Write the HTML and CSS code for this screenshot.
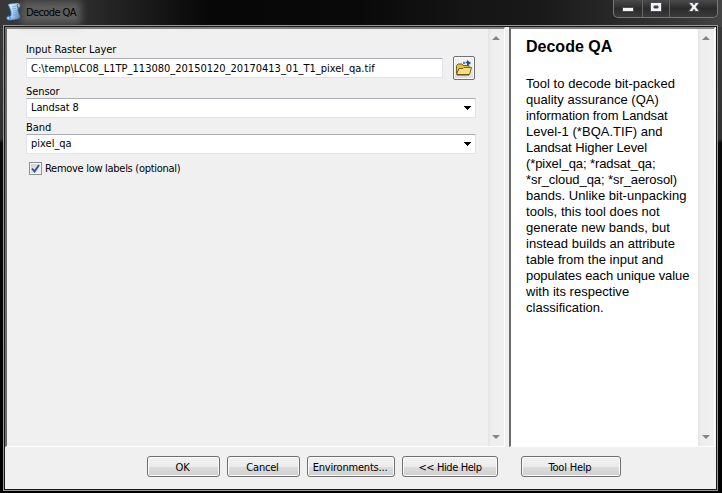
FILE: index.html
```html
<!DOCTYPE html>
<html lang="en">
<head>
<meta charset="utf-8">
<title>Decode QA</title>
<link rel="stylesheet" href="styles.css">
</head>
<body>
<div class="window">
  <header class="titlebar">
    <svg class="app-icon" width="17" height="18" viewBox="0 0 17 18">
      <defs><linearGradient id="scroll" x2="1" y2="1"><stop offset="0" stop-color="#f3fbff"/><stop offset=".55" stop-color="#a9d4f5"/><stop offset="1" stop-color="#3685ce"/></linearGradient></defs>
      <path d="M3 3Q1 1 4 1L12 0Q15 1 14 4L12 5Q11 8 14 13Q14 16 11 16L4 17Q0 17 1 14L5 13Q6 9 3 3Z" fill="url(#scroll)" stroke="#4b94d6" stroke-width=".7"/>
      <path d="M12 1Q10 2 12 5L14 4M1 14Q3 12 4 14T3 16" fill="none" stroke="#3178c1"/>
      <path d="M6 4L10 3M6 6L10 5.5M7 8L11 7.5M7 10L11 9.5M7 12L11 11.5" fill="none" stroke="#5a9bd8" stroke-width=".7"/>
    </svg>
    <span class="title">Decode QA</span>
    <div class="controls">
      <span class="control"><svg width="12" height="11"><rect x=".5" y="5.5" width="11" height="4" fill="#f4f4f4" stroke="#4c4f5b"/></svg></span>
      <span class="control"><svg width="12" height="10"><path d="M.5.5h11v9H.5zM4 4v2h4V4z" fill="#f4f4f4" fill-rule="evenodd" stroke="#4c4f5b"/></svg></span>
      <span class="control close"><svg width="12" height="10"><path d="M.5.5h4L6 2.8 7.500.5h4L8 5l3.500 4.500h-4L6 7.200 4.500 9.500h-4L4 5z" fill="#f4f4f4" stroke="#4c4f5b"/></svg></span>
    </div>
  </header>
  <main class="client">
    <div class="panels">
      <section class="panel params">
        <form class="form">
          <label class="l-input">Input Raster Layer</label>
          <div class="file-row">
            <div class="field file"><span class="t-path">C:\temp\LC08_L1TP_113080_20150120_20170413_01_T1_pixel_qa.tif</span></div>
            <button class="browse" type="button" aria-label="Browse">
              <svg width="18" height="16" viewBox="0 0 18 16"><path d="M1.500 14V5.500L3 4h4l1 1.500h6V8" fill="#e2bd4b" stroke="#78601d"/><path d="M1.500 14.500L4 8.500h4l1-1h7.500l-2 7z" fill="#f7df79" stroke="#78601d"/><path d="M2 15h12" stroke="#5f4815"/><path d="M9 4V2.500h4" fill="none" stroke="#22649e" stroke-width="1.500" stroke-dasharray="2 1"/><path d="M12 0l4 3-4 3z" fill="#125795"/></svg>
            </button>
          </div>
          <label class="l-sensor">Sensor</label>
          <div class="field select"><span class="t-sensor">Landsat 8</span><svg width="8" height="5" shape-rendering="crispEdges"><path d="M0 0h7v1H6v1H5v1H4v1H3V3H2V2H1V1H0z"/></svg></div>
          <label class="l-band">Band</label>
          <div class="field select"><span class="t-band">pixel_qa</span><svg width="8" height="5" shape-rendering="crispEdges"><path d="M0 0h7v1H6v1H5v1H4v1H3V3H2V2H1V1H0z"/></svg></div>
          <div class="check-row">
            <span class="checkbox"><svg width="9" height="9"><path d="M1 4.500L3.500 7.500 8 1" fill="none" stroke="#354f93" stroke-width="1.900"/></svg></span>
            <span class="t-check">Remove low labels (optional)</span>
          </div>
        </form>
        <div class="scrollbar"><svg width="8" height="4"><path d="M0 4L4 0l4 4z" fill="#858585"/></svg><svg width="8" height="4"><path d="M0 0h8L4 4z" fill="#858585"/></svg></div>
      </section>
      <section class="panel help">
        <article>
          <h1>Decode QA</h1>
          <p>Tool to decode bit-packed<br>quality assurance (QA)<br><span class="tight">information from Landsat</span><br>Level-1 (*BQA.TIF) and<br><span class="tight">Landsat Higher Level</span><br><span class="tight">(*pixel_qa; *radsat_qa;</span><br><span class="snug">*sr_cloud_qa; *sr_aerosol)</span><br>bands. Unlike bit-unpacking<br>tools, this tool does not<br>generate new bands, but<br>instead builds an attribute<br>table from the input and<br><span class="snug">populates each unique value</span><br>with its respective<br>classification.</p>
        </article>
        <div class="scrollbar"><svg width="8" height="4"><path d="M0 4L4 0l4 4z" fill="#858585"/></svg><svg width="8" height="4"><path d="M0 0h8L4 4z" fill="#858585"/></svg></div>
      </section>
    </div>
    <footer>
      <button class="btn ok"><span>OK</span></button>
      <button class="btn cancel"><span>Cancel</span></button>
      <button class="btn env"><span>Environments...</span></button>
      <button class="btn hide"><span>&lt;&lt; Hide Help</span></button>
      <button class="btn tool"><span>Tool Help</span></button>
    </footer>
  </main>
</div>
</body>
</html>
```
FILE: styles.css
```css
* { box-sizing: border-box; }
body { margin: 0; width: 722px; height: 493px; overflow: hidden; background: #000; color: #000; font: 11px/14px "DejaVu Sans Condensed", "DejaVu Sans", sans-serif; font-stretch: condensed; }
svg { display: block; flex: none; }
span, label { white-space: nowrap; }
.window { width: 722px; height: 493px; padding: 0 3px 2px; background: linear-gradient(90deg, #383838 0, #303030 70px, #070707 210px, #090909 360px, #151515 470px, #191919 540px, #363636 680px, #444 722px) 0 0 / 722px 27px no-repeat, linear-gradient(#3a3a3a 0, #303030 139px, #090909 143px, #000); }
.titlebar { height: 25px; display: flex; align-items: flex-start; }
.app-icon { margin: 3px 0 0 3px; }
.title { margin: 6px 0 0 3px; width: 50px; letter-spacing: -.6px; background: #5c5c5c; box-shadow: 0 0 7px 5px #5c5c5c; height: 13px; line-height: 14px; }
.controls { margin-left: auto; margin-right: 1px; width: 105px; height: 18px; display: flex; border: 1px solid #777; border-top: 0; border-radius: 0 0 5px 5px; background: linear-gradient(#4a4a4a, #2b2b2b 50%, #3b3b3b); }
.control { width: 29px; display: flex; justify-content: center; padding-top: 2px; border-right: 1px solid #666; }
.control:nth-child(2) { width: 27px; }
.control.close { flex: 1; border: 0; }
.client { width: 715px; height: 466px; border: 1px solid #999; outline: 1px solid #171717; outline-offset: -2px; padding: 1px; background: #f0f0f0; }
.panels { display: flex; height: 420px; gap: 4px; }
.panel { display: flex; border: 2px solid #6c6c6c; border-top-color: #828282; border-right: 1px solid #fff; border-bottom: 1px solid #fff; }
.params { width: 500px; }
.form { flex: 1; padding: 14px 11px 0 19px; }
label { display: block; height: 14px; }
.l-input, .l-sensor, .l-band { letter-spacing: -.06px; }
.file-row { display: flex; gap: 10px; height: 25px; align-items: flex-start; margin: -1px 0 4px; }
.field { background: #fff; border: 1px solid #e2e3ea; border-top-color: #abadb3; padding: 1px 0 0 4px; height: 20px; display: flex; align-items: center; border-radius: 1px; }
.file { width: 417px; margin-top: 2px; }
.browse { width: 22px; height: 24px; padding: 0 0 0 1px; border: 1px solid #707070; border-radius: 2px; background: linear-gradient(#f4f4f4, #ddd); box-shadow: inset 0 0 0 1px #fafafa; }
.select { width: 450px; justify-content: space-between; padding-right: 3px; margin: -1px 0 3px; }
.select span { padding-bottom: 2px; }
.t-sensor { letter-spacing: -.1px; }
.check-row { display: flex; align-items: center; gap: 3px; padding-left: 3px; margin-top: 7px; }
.t-check { letter-spacing: -.29px; padding-top: 1px; }
.checkbox { width: 13px; height: 13px; border: 1px solid #8e8f8f; background: linear-gradient(135deg, #c7ccd5, #f7f7f7); box-shadow: inset 0 0 0 1px #f4f4f4; padding: 1px; }
.scrollbar { width: 16px; display: flex; flex-direction: column; align-items: center; justify-content: space-between; padding: 7px 0; background: linear-gradient(90deg, #e3e3e3, #eee 3px, #f0f0f0); }
.help { width: 206px; background: #fff; }
article { flex: 1; padding: 8px 0 0 15px; font: 13px/16px "Liberation Sans", Arial, sans-serif; }
h1 { margin: 0; font-size: 16px; line-height: 20px; }
p { margin: 19px 0 0; white-space: nowrap; letter-spacing: .03px; }
.snug { letter-spacing: -.08px; }
.tight { letter-spacing: -.09px; }
footer { display: flex; gap: 10px; padding: 9px 0 0 142px; }
.btn { height: 21px; padding: 0; border: 1px solid #707070; border-radius: 3px; background: linear-gradient(#f2f2f2 0, #ebebeb 50%, #ddd 50%, #cfcfcf); box-shadow: inset 0 0 0 1px #fafafa; font: inherit; color: #000; }
.btn span { display: block; padding-top: 2px; letter-spacing: -.2px; }
.ok, .cancel { width: 73px; }
.ok { margin-right: -3px; }
.ok span { padding-right: 2px; }
.cancel { margin-right: -3px; }
.cancel span { padding-right: 2px; }
.env { width: 88px; margin-right: -3px; }
.env span { padding-right: 2px; }
.hide { width: 96px; }
.hide span { letter-spacing: -.4px; }
.tool { width: 100px; margin-left: 13px; }
.tool span { padding-right: 2px; }
```
